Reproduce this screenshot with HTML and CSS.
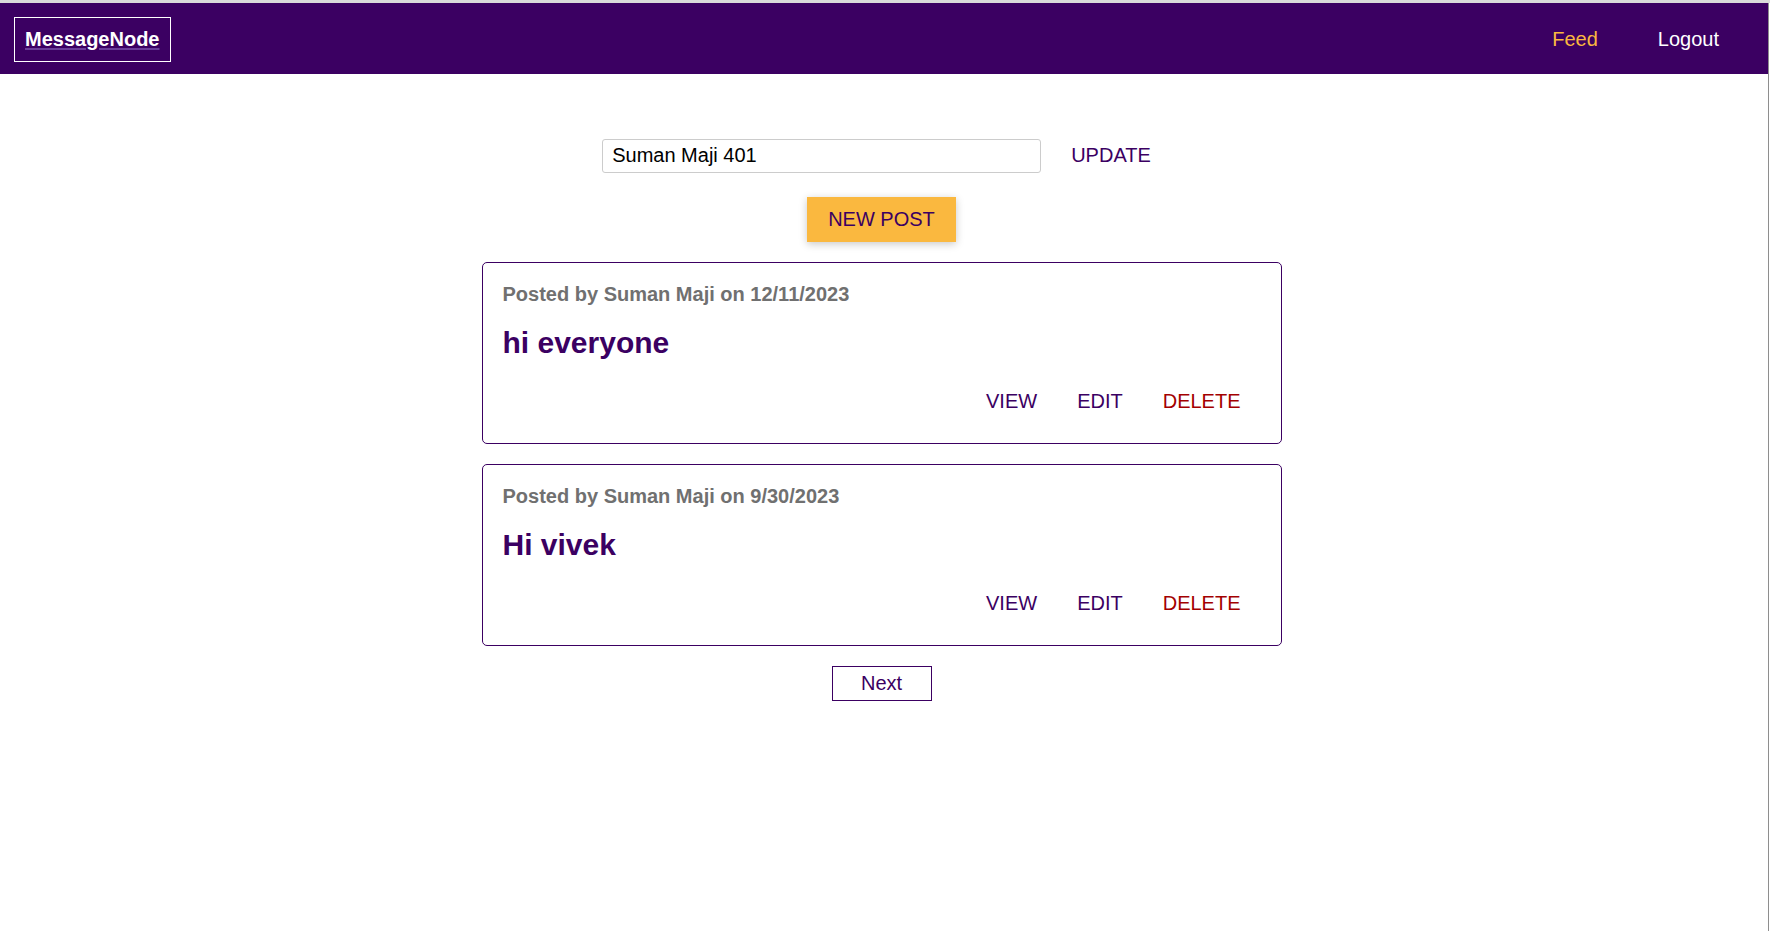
FILE: index.html
```html
<!DOCTYPE html>
<html lang="en">
<head>
<meta charset="utf-8">
<title>MessageNode</title>
<link rel="stylesheet" href="styles.css">
</head>
<body>
<div class="chrome-top"></div>
<div class="app">
  <header class="toolbar">
    <a class="logo" href="#">MessageNode</a>
    <nav class="nav">
      <a class="nav-item active" href="#">Feed</a>
      <a class="nav-item" href="#">Logout</a>
    </nav>
  </header>
  <main class="feed">
    <section class="status">
      <input class="status-input" type="text" value="Suman Maji 401">
      <button class="btn btn-flat">UPDATE</button>
    </section>
    <section class="control">
      <button class="btn btn-accent">NEW POST</button>
    </section>
    <article class="post">
      <p class="post-meta">Posted by Suman Maji on 12/11/2023</p>
      <h1 class="post-title">hi everyone</h1>
      <div class="post-actions">
        <button class="btn btn-flat">VIEW</button>
        <button class="btn btn-flat">EDIT</button>
        <button class="btn btn-flat btn-danger">DELETE</button>
      </div>
    </article>
    <article class="post">
      <p class="post-meta">Posted by Suman Maji on 9/30/2023</p>
      <h1 class="post-title">Hi vivek</h1>
      <div class="post-actions">
        <button class="btn btn-flat">VIEW</button>
        <button class="btn btn-flat">EDIT</button>
        <button class="btn btn-flat btn-danger">DELETE</button>
      </div>
    </article>
    <div class="paginator">
      <button class="pager-btn">Next</button>
    </div>
  </main>
</div>
</body>
</html>
```
FILE: styles.css
```css
* { box-sizing: border-box; }
html, body {
  margin: 0;
  padding: 0;
  background: #ffffff;
  font-family: "Liberation Sans", Arial, sans-serif;
  font-size: 20px;
}
body { min-height: 931px; }
.chrome-top {
  height: 3px;
  background: #dadada;
}
.app {
  margin-right: 1px;
  border-right: 1px solid #8e8e8e;
  min-height: 928px;
}
.toolbar {
  height: 71px;
  background: #3b0062;
  display: flex;
  align-items: center;
  justify-content: space-between;
  padding-left: 14px;
}
.logo {
  display: inline-block;
  font-size: 20px;
  font-weight: bold;
  color: #ffffff;
  border: 1px solid #ffffff;
  padding: 10px;
  line-height: 23px;
  text-decoration: underline;
  text-decoration-color: #6a3d9a;
  text-underline-offset: 2px;
  margin-top: 1px;
}
.nav {
  display: flex;
  margin-right: 19px;
}
.nav-item {
  color: #ffffff;
  text-decoration: none;
  padding: 0 30px;
  font-size: 20px;
  line-height: 23px;
  margin-top: 1px;
}
.nav-item.active { color: #fab83f; }
.feed {
  padding: 60px 5px 40px 0;
  display: flex;
  flex-direction: column;
  align-items: center;
}
.status {
  width: 800px;
  display: flex;
  align-items: center;
  justify-content: center;
  padding-left: 10px;
  gap: 10px;
}
.status-input {
  width: 439px;
  height: 34px;
  border: 1px solid #cccccc;
  border-radius: 3px;
  padding: 0 9px;
  font: inherit;
  font-size: 20px;
  color: #000000;
  background: #ffffff;
  outline: none;
}
.control {
  margin-top: 20px;
  display: flex;
  justify-content: center;
}
.btn {
  font: inherit;
  font-size: 20px;
  line-height: 23px;
  padding: 10px 20px;
  border: 1px solid #3b0062;
  background: #ffffff;
  color: #3b0062;
  border-radius: 0;
  cursor: pointer;
}
.btn-flat {
  border: none;
  background: transparent;
}
.btn-danger { color: #a30000; }
.btn-accent {
  background: #fab83f;
  border-color: #fab83f;
  color: #3b0062;
  box-shadow: 0 2px 8px rgba(0, 0, 0, 0.22);
}
.post {
  width: 800px;
  margin-top: 20px;
  border: 1px solid #3b0062;
  border-radius: 5px;
  padding: 20px 20px 20px 20px;
}
.post-meta {
  margin: 0;
  font-size: 20px;
  line-height: 23px;
  font-weight: bold;
  color: #707070;
}
.post-title {
  margin: 20px 0;
  font-size: 30px;
  line-height: 34px;
  font-weight: bold;
  color: #3b0062;
}
.post-actions {
  display: flex;
  justify-content: flex-end;
}
.paginator {
  margin-top: 20px;
  display: flex;
  justify-content: center;
}
.pager-btn {
  width: 100px;
  padding: 5px 0;
  border: 1px solid #3b0062;
  background: transparent;
  font: inherit;
  font-size: 20px;
  line-height: 23px;
  color: #3b0062;
  cursor: pointer;
}
```
